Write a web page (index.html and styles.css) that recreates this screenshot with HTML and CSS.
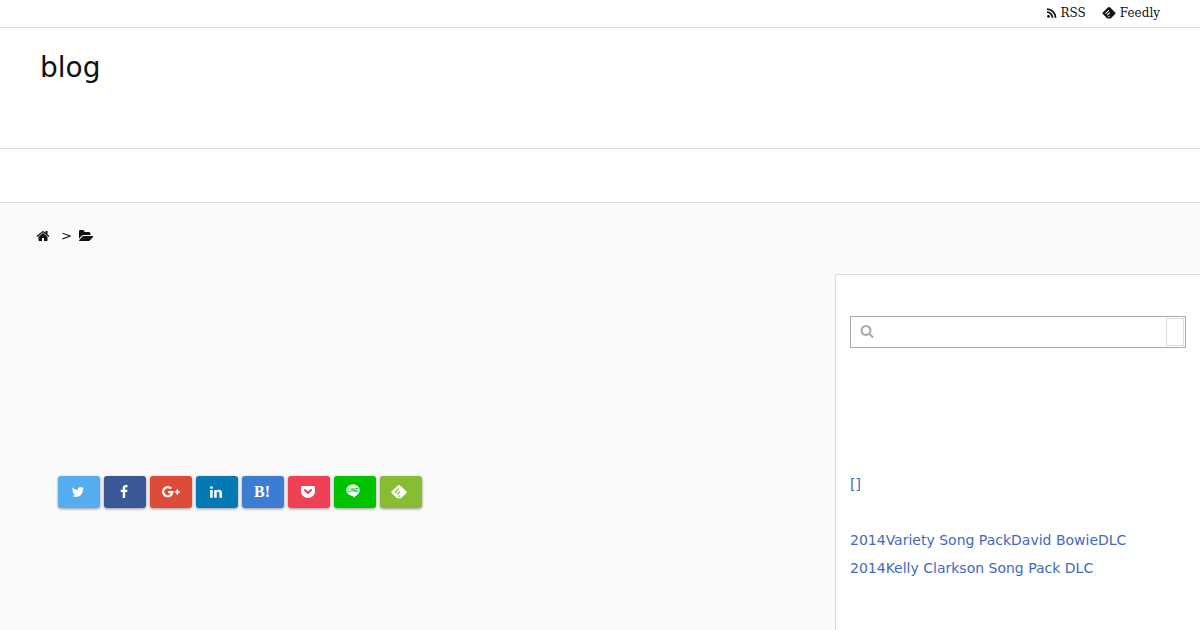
FILE: index.html
```html
<!DOCTYPE html>
<html lang="en">

<head>
    <meta charset="UTF-8">
    <meta name="viewport" content="width=device-width, initial-scale=1.0">
    <title>blog</title>
    <link rel="stylesheet" href="styles.css">
</head>

<body>
    <div class="top-bar">
        <a href="#" class="top-link">
            <svg class="icon-rss" viewBox="0 0 10 10"><circle cx="1.500" cy="8.300" r="1.400" fill="currentColor"/><path d="M0 4.200a5.500 5.500 0 0 1 5.500 5.500M0 1.200a8.500 8.500 0 0 1 8.500 8.500" fill="none" stroke="currentColor" stroke-width="1.800"/></svg>
            RSS
        </a>
        <a href="#" class="top-link">
            <svg class="icon-feedly-small" viewBox="0 0 16 14"><path d="M6.600.7q1.400-1.200 2.800 0l5.800 5.600q.9 1 0 2L10.600 12.700q-.7.6-1.600.6H7q-.9 0-1.600-.6L.8 8.300q-.9-1 0-2z" fill="currentColor"/><path d="M3.900 7.700L8 3.600M5.900 9.600L9 6.500M7.300 11.700L8.500 10.500" fill="none" stroke="#fff" stroke-width="1.200"/></svg>
            Feedly
        </a>
    </div>

    <header class="site-header">
        <h1 class="site-title"><a href="#">blog</a></h1>
    </header>
    <nav class="site-nav"></nav>

    <div class="breadcrumb">
        <a href="#" aria-label="Home"><svg class="icon" viewBox="0 0 1792 1792"><path fill="currentColor" d="M1472 992v480q0 26-19 45t-45 19h-384v-384h-256v384h-384q-26 0-45-19t-19-45v-480q0-1 .5-3t.5-3l575-474 575 474q1 2 1 6zm223-69l-62 74q-8 9-21 11h-3q-13 0-21-7l-692-577-692 577q-12 8-24 7-13-2-21-11l-62-74q-8-10-7-23.500t11-21.500l719-599q32-26 76-26t76 26l244 204v-195q0-14 9-23t23-9h192q14 0 23 9t9 23v408l219 182q10 8 11 21.500t-7 23.500z"/></svg></a>
        <i class="arrow">&gt;</i>
        <svg class="icon" viewBox="0 0 1792 1792"><path fill="currentColor" d="M1815 952q0 31-31 66l-336 396q-43 51-120.500 86.500t-143.500 35.500h-1088q-34 0-60.500-13t-26.500-43q0-31 31-66l336-396q43-51 120.500-86.500t143.500-35.500h1088q34 0 60.500 13t26.500 43zm-343-344v160h-832q-94 0-197 47.500t-164 119.500l-337 396-5 6q0-4-.5-12.500t-.5-12.500v-960q0-92 66-158t158-66h320q92 0 158 66t66 158v32h544q92 0 158 66t66 158z"/></svg>
    </div>

    <div class="content">
        <main class="main">
            <div class="share">
                <a href="#" class="share-btn twitter" aria-label="Twitter"><svg class="icon" viewBox="0 0 1792 1792"><path fill="currentColor" d="M1684 408q-67 98-162 167 1 14 1 42 0 130-38 259.500t-115.500 248.500-184.500 210.500-258 146-323 54.500q-271 0-496-145 35 4 78 4 225 0 401-138-105-2-188-64.500t-114-159.500q33 5 61 5 43 0 85-11-112-23-185.500-111.500t-73.500-205.500v-4q68 38 146 41-66-44-105-115t-39-154q0-88 44-163 121 149 294.500 238.500t371.500 99.500q-8-38-8-74 0-134 94.500-228.500t228.500-94.500q140 0 236 102 109-21 205-78-37 115-142 178 93-10 186-50z"/></svg></a>
                <a href="#" class="share-btn facebook" aria-label="Facebook"><svg class="icon" viewBox="0 0 1792 1792"><path fill="currentColor" d="M1343 12v264h-157q-86 0-116 36t-30 108v189h293l-39 296h-254v759h-306v-759h-255v-296h255v-218q0-186 104-288.500t277-102.500q147 0 228 12z"/></svg></a>
                <a href="#" class="share-btn google" aria-label="Google+"><svg class="icon-google" viewBox="-2 0 20 14"><path d="M9.100 3.500A4.600 4.600 0 1 0 10.300 7.200H6" fill="none" stroke="currentColor" stroke-width="2.200"/><path d="M15.300 4.500v5M12.800 7h5" fill="none" stroke="currentColor" stroke-width="1.700"/></svg></a>
                <a href="#" class="share-btn linkedin" aria-label="LinkedIn"><svg class="icon" viewBox="0 0 1792 1792"><path fill="currentColor" d="M477 625v991h-330v-991h330zm21-306q1 73-50.500 122t-135.500 49h-2q-82 0-132-49t-50-122q0-74 51.500-122.500t134.500-48.500 133 48.500 51 122.500zm1166 729v568h-329v-530q0-105-40.500-164.500t-126.500-59.500q-63 0-105.500 34.500t-63.500 85.500q-11 30-11 81v553h-329q2-399 2-647t-1-296l-1-48h329v144h-2q20-32 41-56t56.500-52 87-43.500 114.500-15.500q171 0 275 113.500t104 332.500z"/></svg></a>
                <a href="#" class="share-btn hatena">B!</a>
                <a href="#" class="share-btn pocket" aria-label="Pocket"><svg class="icon" viewBox="0 0 14 14"><path d="M1.500 1h11Q14 1 14 2.500v4a7 6.500 0 0 1-14 0v-4Q0 1 1.500 1z" fill="currentColor"/><path d="M3.900 5L7 8l3.100-3" fill="none" stroke="#ef4056" stroke-width="1.900" stroke-linecap="round" stroke-linejoin="round"/></svg></a>
                <a href="#" class="share-btn line" aria-label="LINE"><svg class="icon-line" viewBox="0 0 16 16"><path d="M7 .5c3.800 0 6.700 2.500 6.700 5.700 0 2.900-3 5.200-6.400 7.500.2-1 .1-1.700-.5-1.800C3 11.500.3 9.200.3 6.200.3 3 3.200.5 7 .5z" fill="currentColor"/><text x="7" y="8" class="line-text">LINE</text></svg></a>
                <a href="#" class="share-btn feedly" aria-label="Feedly"><svg class="icon-feedly" viewBox="0 0 18 14"><path d="M6.600.7q1.400-1.200 2.800 0l5.800 5.600q.9 1 0 2L10.600 12.700q-.7.6-1.600.6H7q-.9 0-1.600-.6L.8 8.300q-.9-1 0-2z" fill="currentColor"/><path d="M3.900 7.700L8 3.600M5.900 9.600L9 6.500M7.300 11.700L8.500 10.500" fill="none" stroke="#87bd33" stroke-width="1.300"/></svg></a>
            </div>
        </main>

        <aside class="sidebar">
            <form class="search" role="search">
                <label for="search" aria-label="Search"><svg class="icon" viewBox="0 0 1792 1792"><path fill="currentColor" d="M1216 832q0-185-131.500-316.500t-316.500-131.500-316.500 131.500-131.500 316.500 131.500 316.500 316.500 131.500 316.500-131.500 131.500-316.500zm512 832q0 52-38 90t-90 38q-54 0-90-38l-343-342q-179 124-399 124-143 0-273.500-55.500t-225-150-150-225-55.500-273.500 55.500-273.500 150-225 225-150 273.500-55.500 273.500 55.500 225 150 150 225 55.500 273.500q0 220-124 399l343 343q37 37 37 90z"/></svg></label>
                <input type="search" id="search" name="s">
                <button type="submit" aria-label="Search"></button>
            </form>
            <ul class="links">
                <li><a href="#">[]</a></li>
            </ul>
            <ul class="links">
                <li><a href="#">2014Variety Song PackDavid BowieDLC</a></li>
                <li><a href="#">2014Kelly Clarkson Song Pack DLC</a></li>
            </ul>
        </aside>
    </div>
</body>

</html>
```
FILE: styles.css
```css
* {
    box-sizing: border-box;
}

body {
    margin: 0;
    font-family: "DejaVu Sans", sans-serif;
    font-size: 14px;
    line-height: 28px;
    color: #111;
    background: #fafafa;
}

a {
    color: inherit;
    text-decoration: none;
}

svg {
    display: block;
}

.icon {
    width: 14px;
    height: 14px;
}

.icon-rss {
    width: 10px;
    height: 10px;
}

.icon-feedly-small {
    width: 14px;
    height: 12px;
}

.icon-google {
    width: 20px;
    height: 14px;
}

.icon-line {
    width: 16px;
    height: 16px;
}

.icon-feedly {
    width: 18px;
    height: 14px;
}

/* header */
.top-bar {
    display: flex;
    justify-content: flex-end;
    gap: 16px;
    padding: 0 40px 2px;
    height: 28px;
    background: #fff;
    border-bottom: 1px solid #ddd;
    font-family: "DejaVu Serif", serif;
    font-size: 12px;
    line-height: 24px;
}

.top-link {
    display: flex;
    align-items: center;
    gap: 4px;
}

.site-header {
    min-height: 121px;
    padding: 18px 40px;
    background: #fff;
    border-bottom: 1px solid #ddd;
}

.site-title {
    margin: 0;
    font-size: 28px;
    font-weight: normal;
    line-height: 44px;
}

.site-nav {
    height: 54px;
    background: #fff;
    border-bottom: 1px solid #ddd;
}

.breadcrumb {
    display: flex;
    align-items: center;
    padding: 18px 36px 23px;
    line-height: 30px;
}

.arrow {
    margin: 0 7px 0 11px;
    font-size: 13px;
}

/* columns */
.content {
    display: flex;
}

.main {
    flex: 1;
    padding: 202px 58px 0;
}

.share {
    display: flex;
    gap: 4px;
}

.share-btn {
    display: flex;
    align-items: center;
    justify-content: center;
    width: 42px;
    height: 32px;
    padding-right: 2px;
    border-radius: 3px;
    box-shadow: 0 1px 3px rgba(0, 0, 0, 0.4);
    color: #fff;
}

.twitter {
    background: #55acee;
}

.facebook {
    background: #3b5998;
}

.google {
    background: #dd4b39;
}

.linkedin {
    background: #0479b4;
}

.hatena {
    background: #3c7dd1;
    font-family: "Liberation Serif", serif;
    font-size: 16px;
    font-weight: bold;
}

.pocket {
    background: #ef4056;
}

.line {
    background: #00c300;
}

.line-text {
    font: bold 5px "Liberation Sans", sans-serif;
    text-anchor: middle;
    fill: #00c300;
}

.feedly {
    background: #87bd33;
}

.sidebar {
    width: 365px;
    min-height: 356px;
    padding: 41px 14px 0;
    background: #fff;
    border: 1px solid #ddd;
    border-width: 1px 0 0 1px;
}

.search {
    display: flex;
    height: 32px;
    margin-bottom: 122px;
    padding: 1px;
    border: 1px solid #aaa;
}

.search label {
    display: flex;
    align-items: center;
    padding: 0 8px 2px;
    color: #aaa;
}

.search input {
    flex: 1;
    min-width: 0;
    border: 0;
    outline: 0;
    background: none;
    font: inherit;
}

.search button {
    width: 18px;
    border: 1px solid #ddd;
    background: #fff;
}

.links {
    margin: 0 0 28px;
    padding: 0;
    list-style: none;
    color: #4169c0;
}
```
